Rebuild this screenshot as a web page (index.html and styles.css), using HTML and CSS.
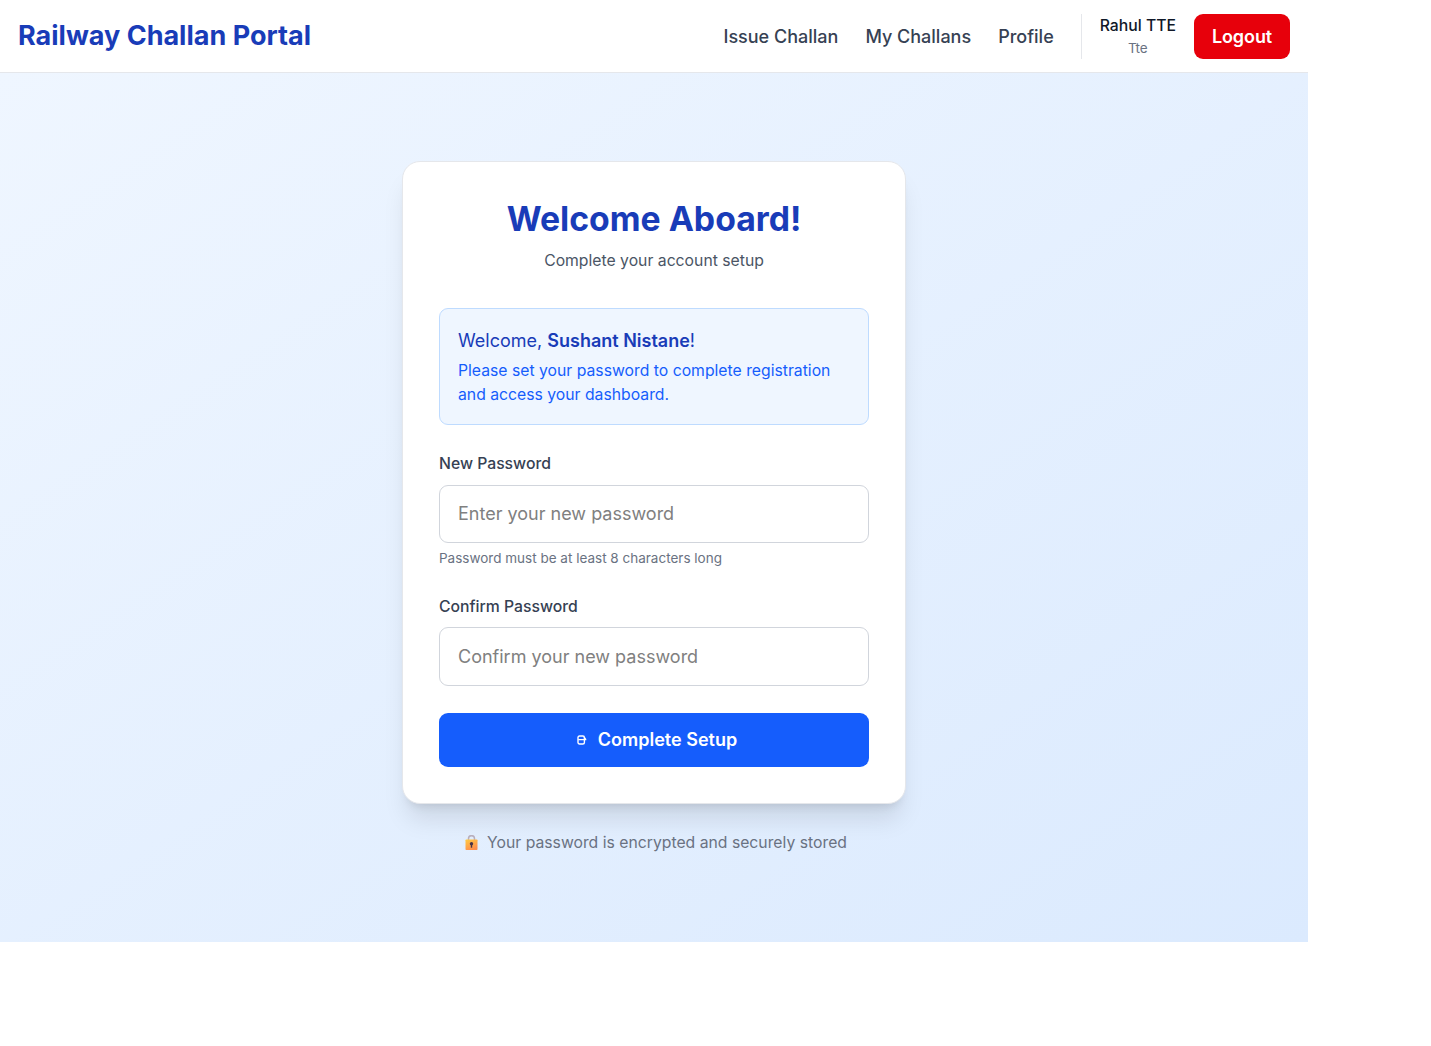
FILE: index.html
```html
<!DOCTYPE html>
<html lang="en">
<head>
<meta charset="utf-8">
<title>Railway Challan Portal</title>
<link rel="stylesheet" href="styles.css">
</head>
<body>
<div class="app">
  <header class="navbar">
    <a class="brand">Railway Challan Portal</a>
    <nav class="nav">
      <a class="nav-link">Issue Challan</a>
      <a class="nav-link">My Challans</a>
      <a class="nav-link">Profile</a>
      <div class="account">
        <div class="user">
          <span class="user-name">Rahul TTE</span>
          <span class="user-role">Tte</span>
        </div>
        <button class="logout">Logout</button>
      </div>
    </nav>
  </header>
  <main class="page">
    <section class="card">
      <h1 class="title">Welcome Aboard!</h1>
      <p class="subtitle">Complete your account setup</p>
      <div class="notice">
        <p class="notice-title">Welcome, <strong>Sushant Nistane</strong>!</p>
        <p class="notice-text">Please set your password to complete registration and access your dashboard.</p>
      </div>
      <form class="form">
        <div class="field">
          <label class="label" for="new">New Password</label>
          <input class="input" id="new" type="password" placeholder="Enter your new password">
          <p class="hint">Password must be at least 8 characters long</p>
        </div>
        <div class="field field-confirm">
          <label class="label" for="confirm">Confirm Password</label>
          <input class="input" id="confirm" type="password" placeholder="Confirm your new password">
        </div>
        <button class="submit" type="button">
          <svg class="submit-icon" viewBox="-6 0 16 10" fill="none" stroke="currentColor" stroke-width="1.4"><rect x="1" y="1" width="6.4" height="8" rx="1.5"/><path d="M1.2 4.6H9.3M7.1 2.2L8.7 4.5"/></svg>
          <span class="submit-text">Complete Setup</span>
        </button>
      </form>
    </section>
    <p class="security">
      <svg class="lock" viewBox="-3.5 0.5 18 16"><defs><linearGradient id="body" x1="0" y1="0" x2="0.5" y2="1"><stop offset="0" stop-color="#ffcb43"/><stop offset="1" stop-color="#ff8f4c"/></linearGradient></defs><path d="M4 6V4.2a3 3 0 0 1 6 0V6" fill="none" stroke="#b8aebc" stroke-width="1.5"/><rect x="1" y="5" width="12" height="10.4" rx="0.7" fill="url(#body)"/><circle cx="7" cy="9.2" r="1.7" fill="#493349"/><path d="M6.3 9.5h1.4v3.7H6.3z" fill="#493349"/></svg>
      <span>Your password is encrypted and securely stored</span>
    </p>
  </main>
</div>
</body>
</html>
```
FILE: styles.css
```css
* { box-sizing: border-box; margin: 0; padding: 0; }
html { font-size: 18px; }
body { font-family: Inter, "Liberation Sans", sans-serif; line-height: 1.5; color: #101828; background: #fff; }
button, input { font: inherit; }
.app { width: 1308px; }
.navbar { display: flex; align-items: center; justify-content: space-between; height: 73px; padding: 0 18px; border-bottom: 1px solid #e5e7eb; background: #fff; }
.brand { font-size: 27px; font-weight: 700; color: #193cb8; }
.nav { display: flex; align-items: center; gap: 27px; }
.nav-link { font-weight: 500; color: #364153; }
.account { display: flex; align-items: center; gap: 18px; height: 45px; padding-left: 18px; border-left: 1px solid #e5e7eb; }
.user { display: flex; flex-direction: column; align-items: center; }
.user-name { font-size: 15.75px; line-height: 24px; font-weight: 500; }
.user-role { font-size: 13.5px; line-height: 20px; color: #6a7282; }
.logout { width: 96px; height: 45px; border: 0; border-radius: 9px; background: #e7000b; color: #fff; font-weight: 600; letter-spacing: -0.1px; }
.page { display: flex; flex-direction: column; align-items: center; height: 869px; padding-top: 88px; background: linear-gradient(to bottom right, #eff6ff, #dbeafe); }
.card { width: 504px; padding: 36px; border: 1px solid #e5e7eb; border-radius: 18px; background: #fff; box-shadow: 0 20px 25px -5px rgb(0 0 0 / 0.1), 0 8px 10px -6px rgb(0 0 0 / 0.1); }
.title { font-size: 33.75px; line-height: 42px; font-weight: 700; text-align: center; color: #193cb8; }
.subtitle { margin: 9px 0 35px; font-size: 15.75px; line-height: 24px; text-align: center; color: #4a5565; }
.notice { padding: 18px 18px 17px; border: 1px solid #bedbff; border-radius: 9px; background: #eff6ff; }
.notice-title { line-height: 27px; color: #193cb8; }
.notice-title strong { font-weight: 600; }
.notice-text { margin-top: 5px; font-size: 15.75px; line-height: 24px; color: #155dfc; }
.form { display: flex; flex-direction: column; gap: 27px; margin-top: 27px; }
.label { display: block; margin-bottom: 9px; font-size: 15.75px; line-height: 24px; font-weight: 500; color: #364153; }
.input { display: block; width: 100%; height: 58px; padding: 0 18px 2px; border: 1px solid #d1d5dc; border-radius: 9px; background: #fff; }
.field-confirm .label { margin-bottom: 8px; }
.field-confirm .input { height: 59px; padding-bottom: 0; }
.input::placeholder { color: #808080; }
.hint { margin-top: 5px; font-size: 13.5px; line-height: 20px; color: #6a7282; }
.submit { display: flex; align-items: center; justify-content: center; gap: 11px; height: 54px; border: 0; border-radius: 9px; background: #155dfc; color: #fff; font-weight: 600; }
.submit-icon { width: 16px; height: 10px; }
.submit-text { padding-bottom: 2px; }
.security { display: flex; align-items: center; gap: 8px; margin-top: 27px; font-size: 15.75px; line-height: 24px; color: #6a7282; }
.lock { width: 18px; height: 16px; }
```
